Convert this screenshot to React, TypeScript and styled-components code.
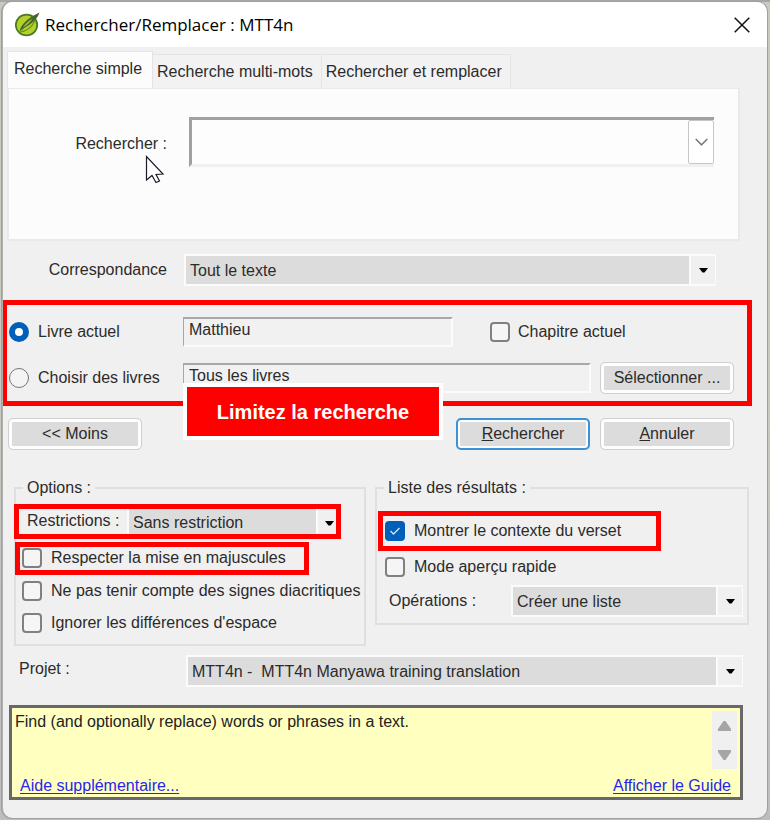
import React from "react";
import styled, { createGlobalStyle, css } from "styled-components";

const GlobalStyle = createGlobalStyle`
  *, *::before, *::after { box-sizing: border-box; }
  body {
    margin: 0;
    background: #b4b4b4;
    color: #2b2b2b;
    font: 16px/20px "Liberation Sans", Arial, sans-serif;
  }
  button, input, select { font: inherit; color: inherit; margin: 0; }
`;

const RED = "#ff0000";

const Desktop = styled.div`
  display: flex;
  min-height: 100vh;
  padding: 2px 3px 2px 2px;
  background: linear-gradient(#a6a6a6 0 2px, #c9c9c0 2px 50%, #bdbdbd);
`;

const Window = styled.main`
  position: relative;
  display: flex;
  flex-direction: column;
  flex: 1;
  min-width: 0;
  background: #f0f0f0;
  border-left: 1px solid #b0b0b0;
  border-radius: 10px;
  overflow: hidden;
  box-shadow: 0 0 0 1px #a0a0a0;
`;

const TitleBar = styled.header`
  display: flex;
  align-items: center;
  gap: 5px;
  height: 45px;
  padding: 0 10px 0 12px;
  background: #fff;
  color: #000;
`;

const Title = styled.h1`
  flex: 1;
  margin: 0;
  font: 400 17px/24px "Open Sans", "Noto Sans", sans-serif;
`;

const CloseButton = styled.button`
  display: grid;
  place-items: center;
  width: 30px;
  height: 30px;
  padding: 0;
  border: 0;
  background: none;
`;

const Tabs = styled.div`
  display: flex;
  align-items: flex-end;
  padding: 4px 0 0 4px;
`;

const Tab = styled.button<{ $active?: boolean }>`
  height: 34px;
  padding: 0 8px 0 4px;
  border: 1px solid #e4e4e4;
  border-left-width: 0;
  border-bottom: 0;
  background: #f2f2f2;
  white-space: nowrap;
  ${(p) =>
    p.$active &&
    css`
      height: 37px;
      padding: 0 10px 2px 6px;
      border-left-width: 1px;
      background: #fcfcfc;
    `}
`;

const SearchPanel = styled.section`
  display: flex;
  align-items: flex-start;
  height: 153px;
  margin: 0 27px 0 4px;
  padding: 28px 24px 0 0;
  background: #fcfcfc;
  border: 2px solid #e9e9e9;
  border-top-width: 1px;
`;

const SearchLabel = styled.label`
  width: 180px;
  padding: 17px 22px 0 0;
  text-align: right;
`;

const SearchBox = styled.div`
  display: flex;
  flex: 1;
  min-width: 0;
  height: 50px;
  border: solid #a0a0a0;
  border-width: 3px 0 3px 3px;
  border-bottom-color: #f0f0f0;
  background: #fdfdfd;
`;

const SearchInput = styled.input`
  flex: 1;
  min-width: 0;
  padding: 0 6px;
  border: 0;
  outline: 0;
  background: none;
`;

const HistoryButton = styled.button`
  display: grid;
  place-items: center;
  width: 26px;
  padding: 0;
  border: 1px solid #c6c6c6;
  border-radius: 2px;
  background: #fff;
`;

const Row = styled.div`
  display: flex;
  align-items: center;
`;

const MatchRow = styled(Row)`
  padding: 13px 51px 14px 0;
`;

const MatchLabel = styled.label`
  width: 181px;
  padding-right: 17px;
  text-align: right;
`;

const SelectShell = styled.div<{ $height: number; $flush?: boolean }>`
  display: grid;
  grid-template-columns: 1fr ${(p) => (p.$flush ? 20 : 26)}px;
  flex: 1;
  min-width: 0;
  height: ${(p) => p.$height}px;
  border: solid #fbfbfb;
  border-width: ${(p) => (p.$flush ? "0 0 0 2px" : "2px 1px 2px 2px")};
`;

const NativeSelect = styled.select`
  grid-area: 1 / 1 / 2 / 3;
  min-width: 0;
  padding: 2px 28px 0 4px;
  appearance: none;
  border: 0;
  border-radius: 0;
  background: #dcdcdc;
`;

const SelectArrow = styled.span<{ $flush?: boolean }>`
  grid-area: 1 / 2;
  display: grid;
  place-items: center;
  padding: ${(p) => (p.$flush ? "4px 0 0 4px" : "0")};
  border-left: 2px solid #fbfbfb;
  background: #f0f0f0;
  pointer-events: none;
`;

const ScopeFrame = styled.section`
  position: relative;
  display: grid;
  gap: 15px;
  margin: 0 15px 0 -1px;
  padding: 11px 13px 8px 2px;
  border: 5px solid ${RED};
`;

const ScopeRow = styled(Row)`
  height: 31px;
`;

const Choice = styled.label<{ $width?: number; $gap?: number }>`
  display: flex;
  align-items: center;
  gap: ${(p) => p.$gap ?? 9}px;
  width: ${(p) => (p.$width ? `${p.$width}px` : "max-content")};
  background: #f0f0f0;
  white-space: nowrap;
`;

const Radio = styled.input.attrs({ type: "radio" })`
  width: 20px;
  height: 20px;
  appearance: none;
  border: 1px solid #747474;
  border-radius: 50%;
  background: #f4f4f4;
  &:checked {
    border: 6px solid #005fb8;
    background: #fff;
  }
`;

const Check = styled.input.attrs({ type: "checkbox" })`
  grid-area: 1 / 1;
  width: 20px;
  height: 20px;
  appearance: none;
  border: 2px solid #808080;
  border-radius: 4px;
  background: #f5f5f5;
  &:checked {
    border-color: #005fb8;
    background: #005fb8;
  }
`;

const CheckShell = styled.span`
  display: grid;
  place-items: center;
  svg { grid-area: 1 / 1; pointer-events: none; }
`;

const BookField = styled.input`
  flex: 1;
  min-width: 0;
  height: 30px;
  padding: 0 5px 4px;
  outline: 0;
  border: solid #a8a8a8;
  border-width: 2px 2px 2px 1px;
  border-right-color: #fbfbfb;
  border-bottom-color: #fbfbfb;
  background: #f1f1f1;
`;

const ChapterCell = styled.div`
  width: 244px;
  margin-left: 37px;
`;

const PushButton = styled.button<{ $primary?: boolean }>`
  width: 134px;
  height: 32px;
  padding: 0;
  border: ${(p) => (p.$primary ? "2px solid #3c92d6" : "1px solid #cfcfcf")};
  border-radius: 5px;
  background: #dcdcdc;
  box-shadow: inset 0 0 0 ${(p) => (p.$primary ? 2 : 3)}px #fdfdfd;
`;

const SelectBooksButton = styled(PushButton)`
  margin-left: 9px;
`;

const Callout = styled.strong`
  position: absolute;
  top: 78px;
  left: 176px;
  display: grid;
  place-items: center;
  width: 260px;
  height: 57px;
  border: 4px solid #fff;
  background: ${RED};
  color: #fff;
  font-size: 20px;
`;

const Actions = styled(Row)`
  gap: 10px;
  padding: 12px 33px 0 5px;
`;

const Spacer = styled.div`
  flex: 1;
`;

const Groups = styled.div`
  display: grid;
  grid-template-columns: 352fr 374fr;
  align-items: start;
  gap: 9px;
  padding: 28px 18px 0 11px;
`;

const Group = styled.fieldset<{ $height: number }>`
  min-width: 0;
  height: ${(p) => p.$height}px;
  margin: 0;
  padding: 0;
  border: 2px solid #dfdfdf;
`;

const Legend = styled.legend`
  margin-left: 7px;
  padding: 0 4px;
`;

const Highlight = styled.div`
  display: flex;
  align-items: center;
  border: 5px solid ${RED};
`;

const RestrictionFrame = styled(Highlight)`
  height: 35px;
  margin: 6px 23px 0 -2px;
`;

const RestrictionLabel = styled.label`
  width: 108px;
  padding: 0 0 2px 8px;
`;

const CaseFrame = styled(Highlight)`
  width: max-content;
  height: 33px;
  margin: 3px 0 0 -1px;
  padding: 0 18px 2px 2px;
`;

const VerseFrame = styled(Highlight)`
  width: max-content;
  height: 40px;
  margin: 13px 0 0 1px;
  padding: 0 35px 0 2px;
`;

const OptionList = styled.div<{ $indent: number }>`
  display: grid;
  gap: 4px;
  padding: 2px 0 0 ${(p) => p.$indent}px;
  ${Choice} { height: 28px; }
`;

const OperationRow = styled(Row)`
  padding: 4px 4px 0 12px;
`;

const OperationLabel = styled.label`
  width: 122px;
`;

const ProjectRow = styled(Row)`
  padding: 9px 24px 0 16px;
`;

const ProjectLabel = styled.label`
  width: 167px;
  padding-bottom: 4px;
`;

const HelpBox = styled.aside`
  display: flex;
  flex-direction: column;
  justify-content: space-between;
  height: 95px;
  margin: 18px 24px 18px 6px;
  padding: 3px 3px 1px;
  border: 3px solid #686868;
  background: #ffffc0;
  color: #222;
`;

const HelpTop = styled.div`
  display: flex;
  justify-content: space-between;
`;

const HelpText = styled.p`
  margin: 0;
  padding-top: 1px;
`;

const Scroller = styled.div`
  display: grid;
  width: 25px;
  height: 58px;
  background: #f0f0f0;
`;

const ScrollButton = styled.button`
  display: grid;
  place-items: center;
  padding: 0;
  border: 0;
  background: none;
`;

const HelpLinks = styled.div`
  display: flex;
  justify-content: space-between;
  padding: 0 6px 0 5px;
`;

const HelpLink = styled.a`
  color: #2626f0;
  text-underline-offset: 2px;
`;

const Pointer = styled.svg`
  position: absolute;
  top: 153px;
  left: 142px;
`;

function Dropdown({ id, value, height, flush }: { id: string; value: string; height: number; flush?: boolean }) {
  return (
    <SelectShell $height={height} $flush={flush}>
      <NativeSelect id={id}>
        <option>{value}</option>
      </NativeSelect>
      <SelectArrow $flush={flush}>
        <svg width="9" height="5" viewBox="0 0 9 5" aria-hidden="true">
          <path d="M0 0h9L5.500 4.500h-2z" fill="#000" />
        </svg>
      </SelectArrow>
    </SelectShell>
  );
}

function CheckChoice({ label, checked, gap }: { label: string; checked?: boolean; gap?: number }) {
  return (
    <Choice $gap={gap}>
      <CheckShell>
        <Check defaultChecked={checked} />
        {checked && (
          <svg width="12" height="10" viewBox="0 0 12 10" aria-hidden="true">
            <path d="M1.500 5 4.500 8 10.500 2" fill="none" stroke="#d4e6f6" strokeWidth="1.300" />
          </svg>
        )}
      </CheckShell>
      {label}
    </Choice>
  );
}

function AppIcon() {
  return (
    <svg width="25" height="25" viewBox="0 0 25 25" aria-hidden="true">
      <ellipse cx="11.500" cy="13" rx="10.700" ry="10.400" fill="#b5d02c" stroke="#4c7a22" strokeWidth="1.800" />
      <path d="M4.500 19.500C6 12.500 12 6.500 24.500.5 22.500 6.500 17 12 10 15.500z" fill="#44682c" />
      <path d="M8 15.500C10 12 13 9 17.500 6.500 15.500 10 12.500 13 8 15.500z" fill="#9fbd35" />
      <path d="M4.500 20C11 19.500 17 15 20 8.500" fill="none" stroke="#6b9426" strokeWidth="1.200" />
    </svg>
  );
}

export default function App() {
  return (
    <Desktop>
      <GlobalStyle />
      <Window>
        <TitleBar>
          <AppIcon />
          <Title>Rechercher/Remplacer : MTT4n</Title>
          <CloseButton aria-label="Fermer">
            <svg width="16" height="16" viewBox="0 0 16 16" aria-hidden="true">
              <path d="M.7.7l14.600 14.600M15.300.7.7 15.300" stroke="#111" strokeWidth="1.500" />
            </svg>
          </CloseButton>
        </TitleBar>

        <Tabs role="tablist">
          <Tab role="tab" aria-selected="true" $active>Recherche simple</Tab>
          <Tab role="tab" aria-selected="false">Recherche multi-mots</Tab>
          <Tab role="tab" aria-selected="false">Rechercher et remplacer</Tab>
        </Tabs>
        <SearchPanel>
          <SearchLabel htmlFor="query">Rechercher :</SearchLabel>
          <SearchBox>
            <SearchInput id="query" />
            <HistoryButton aria-label="Historique">
              <svg width="13" height="8" viewBox="0 0 13 8" aria-hidden="true">
                <path d="M.7 1 6.500 6.800 12.300 1" fill="none" stroke="#7c7c7c" strokeWidth="1.600" />
              </svg>
            </HistoryButton>
          </SearchBox>
        </SearchPanel>

        <MatchRow>
          <MatchLabel htmlFor="match">Correspondance</MatchLabel>
          <Dropdown id="match" value="Tout le texte" height={32} />
        </MatchRow>

        <ScopeFrame>
          <ScopeRow>
            <Choice $width={174}>
              <Radio name="scope" defaultChecked />
              Livre actuel
            </Choice>
            <BookField aria-label="Livre actuel" readOnly value="Matthieu" />
            <ChapterCell>
              <CheckChoice label="Chapitre actuel" gap={8} />
            </ChapterCell>
          </ScopeRow>
          <ScopeRow>
            <Choice $width={174}>
              <Radio name="scope" />
              Choisir des livres
            </Choice>
            <BookField aria-label="Livres choisis" readOnly value="Tous les livres" />
            <SelectBooksButton>Sélectionner ...</SelectBooksButton>
          </ScopeRow>
          <Callout>Limitez la recherche</Callout>
        </ScopeFrame>

        <Actions>
          <PushButton>&lt;&lt; Moins</PushButton>
          <Spacer />
          <PushButton $primary><u>R</u>echercher</PushButton>
          <PushButton><u>A</u>nnuler</PushButton>
        </Actions>

        <Groups>
          <Group $height={168}>
            <Legend>Options :</Legend>
            <RestrictionFrame>
              <RestrictionLabel htmlFor="restriction">Restrictions :</RestrictionLabel>
              <Dropdown id="restriction" value="Sans restriction" height={25} flush />
            </RestrictionFrame>
            <CaseFrame>
              <CheckChoice label="Respecter la mise en majuscules" />
            </CaseFrame>
            <OptionList $indent={6}>
              <CheckChoice label="Ne pas tenir compte des signes diacritiques" />
              <CheckChoice label="Ignorer les différences d'espace" />
            </OptionList>
          </Group>
          <Group $height={147}>
            <Legend>Liste des résultats :</Legend>
            <VerseFrame>
              <CheckChoice label="Montrer le contexte du verset" checked />
            </VerseFrame>
            <OptionList $indent={8}>
              <CheckChoice label="Mode aperçu rapide" />
            </OptionList>
            <OperationRow>
              <OperationLabel htmlFor="operation">Opérations :</OperationLabel>
              <Dropdown id="operation" value="Créer une liste" height={32} />
            </OperationRow>
          </Group>
        </Groups>

        <ProjectRow>
          <ProjectLabel htmlFor="project">Projet :</ProjectLabel>
          <Dropdown id="project" value={"MTT4n -\u00a0 MTT4n Manyawa training translation"} height={32} />
        </ProjectRow>

        <HelpBox>
          <HelpTop>
            <HelpText>Find (and optionally replace) words or phrases in a text.</HelpText>
            <Scroller>
              <ScrollButton aria-label="Défiler vers le haut">
                <svg width="13" height="10" viewBox="0 0 13 10" aria-hidden="true">
                  <path d="M5.500 0h2L13 8v2H0V8z" fill="#a5a5a5" />
                </svg>
              </ScrollButton>
              <ScrollButton aria-label="Défiler vers le bas">
                <svg width="13" height="10" viewBox="0 0 13 10" aria-hidden="true">
                  <path d="M5.500 10h2L13 2V0H0v2z" fill="#a5a5a5" />
                </svg>
              </ScrollButton>
            </Scroller>
          </HelpTop>
          <HelpLinks>
            <HelpLink href="#aide">Aide supplémentaire...</HelpLink>
            <HelpLink href="#guide">Afficher le Guide</HelpLink>
          </HelpLinks>
        </HelpBox>

        <Pointer width="20" height="29" viewBox="0 0 20 29" aria-hidden="true">
          <path
            d="M1.500 1.500v23.500l5.500-4.500 4 7 3.500-1.500-3.500-6.500 7-.5z"
            fill="#fff"
            stroke="#1b1b2b"
            strokeWidth="1.200"
          />
        </Pointer>
      </Window>
    </Desktop>
  );
}
